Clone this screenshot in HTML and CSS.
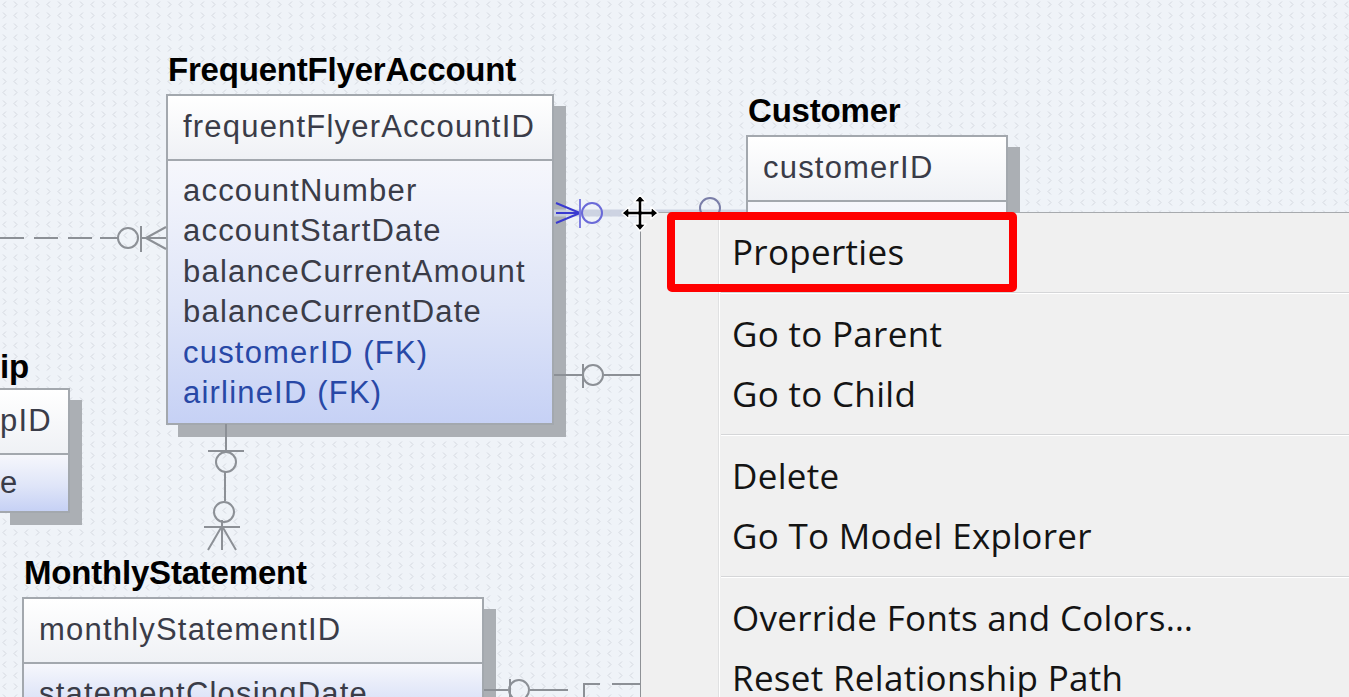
FILE: index.html
```html
<!DOCTYPE html>
<html lang="en">
<head>
<meta charset="utf-8">
<title>ER Diagram – Context Menu</title>
<link rel="stylesheet" href="styles.css">
</head>
<body>
<div class="canvas">

  <div class="entity ent-ffa">
    <div class="ent-title">FrequentFlyerAccount</div>
    <div class="ent-box">
      <div class="ent-pk"><div class="attr">frequentFlyerAccountID</div></div>
      <div class="ent-attrs">
        <div class="attr">accountNumber</div>
        <div class="attr">accountStartDate</div>
        <div class="attr">balanceCurrentAmount</div>
        <div class="attr">balanceCurrentDate</div>
        <div class="attr fk">customerID (FK)</div>
        <div class="attr fk">airlineID (FK)</div>
      </div>
    </div>
  </div>

  <div class="entity ent-customer">
    <div class="ent-title">Customer</div>
    <div class="ent-box">
      <div class="ent-pk"><div class="attr">customerID</div></div>
      <div class="ent-attrs ent-attrs-hidden"></div>
    </div>
  </div>

  <div class="entity ent-partial">
    <div class="ent-title">ip</div>
    <div class="ent-box">
      <div class="ent-pk"><div class="attr">pID</div></div>
      <div class="ent-attrs">
        <div class="attr">e</div>
      </div>
    </div>
  </div>

  <div class="entity ent-monthly">
    <div class="ent-title">MonthlyStatement</div>
    <div class="ent-box">
      <div class="ent-pk"><div class="attr">monthlyStatementID</div></div>
      <div class="ent-attrs">
        <div class="attr">statementClosingDate</div>
      </div>
    </div>
  </div>

  <svg class="edges" width="1349" height="697" viewBox="0 0 1349 697" aria-hidden="true">
    <g fill="none" stroke="#8c9096" stroke-width="2">
      <!-- left dashed relationship into FrequentFlyerAccount -->
      <path d="M0 238 H96" stroke-dasharray="24 10"/>
      <path d="M100 238 H118"/>
      <circle cx="128" cy="238" r="10"/>
      <path d="M141 226 V252"/>
      <path d="M141 238 H166 M146 238 L166 227 M146 238 L166 249"/>

      <!-- right relationship y=375 -->
      <path d="M554 375 H582 M604 375 H640"/>
      <path d="M583 364 V388"/>
      <circle cx="593" cy="375" r="10"/>

      <!-- vertical relationship down to MonthlyStatement -->
      <path d="M226 424 V451"/>
      <path d="M208 451 H244"/>
      <circle cx="226" cy="462" r="10"/>
      <path d="M225 472 V501"/>
      <circle cx="224" cy="512" r="10"/>
      <path d="M204 527 H240"/>
      <path d="M222 520 V550 M222 526 L208 550 M222 526 L236 550"/>

      <!-- bottom relationship -->
      <path d="M484 690 H508 M530 690 H568"/>
      <circle cx="519" cy="690" r="10"/>
      <path d="M510 679 V697"/>
      <path d="M584 697 V684 H600 M612 684 H640"/>
    </g>

    <!-- selected relationship (FFA to Customer) -->
    <path d="M554 213 H746" stroke="#c9cfdf" stroke-width="7" fill="none" opacity="0.9"/>
    <g fill="none" stroke="#3a3ad0" stroke-width="2">
      <path d="M556 203 L580 213 L556 223 M556 213 H580"/>
      <path d="M580 199 V228" stroke="#7c7ce0"/>
      <circle cx="592" cy="213" r="10" stroke="#6a6ad8"/>
    </g>
    <circle cx="710" cy="208" r="10" fill="none" stroke="#7a7ea8" stroke-width="2"/>
  </svg>

  <div class="menu">
    <div class="menu-gutter"></div>
    <ul class="menu-list">
      <li class="menu-item">Properties</li>
      <li class="menu-sep"></li>
      <li class="menu-item">Go to Parent</li>
      <li class="menu-item">Go to Child</li>
      <li class="menu-sep"></li>
      <li class="menu-item">Delete</li>
      <li class="menu-item">Go To Model Explorer</li>
      <li class="menu-sep"></li>
      <li class="menu-item">Override Fonts and Colors…</li>
      <li class="menu-item">Reset Relationship Path</li>
    </ul>
  </div>

  <div class="highlight-box"></div>

  <svg class="move-cursor" width="40" height="40" viewBox="0 0 40 40" aria-hidden="true">
    <path d="M20 2 L26 9 L22 9 L22 18 L31 18 L31 14 L38 20 L31 26 L31 22 L22 22 L22 31 L26 31 L20 38 L14 31 L18 31 L18 22 L9 22 L9 26 L2 20 L9 14 L9 18 L18 18 L18 9 L14 9 Z" fill="#000" stroke="#fff" stroke-width="1.5" stroke-linejoin="round"/>
  </svg>
</div>
</body>
</html>
```

FILE: styles.css
```css
html, body {
  margin: 0;
  padding: 0;
}

body {
  width: 1349px;
  height: 697px;
  overflow: hidden;
  background: #eef2f7;
}

.canvas {
  position: relative;
  width: 1349px;
  height: 697px;
  overflow: hidden;
  background-color: #eff3f8;
  background-image: url("data:image/svg+xml,%3Csvg xmlns='http://www.w3.org/2000/svg' width='22' height='22'%3E%3Cg fill='none' stroke='%23d3d7de' stroke-width='1'%3E%3Cpath d='M6 1.5 L3 4.5 L6 7.5'/%3E%3Cpath d='M14 1.5 L17 4.5 L14 7.5'/%3E%3Cpath d='M17 12.5 L14 15.5 L17 18.5'/%3E%3Cpath d='M3 12.5 L6 15.5 L3 18.5'/%3E%3C/g%3E%3C/svg%3E");
}

/* ---------- entities (diagram nodes) ---------- */
.entity {
  position: absolute;
  display: flex;
  flex-direction: column;
}

.ent-title {
  font-family: "Liberation Sans", Arial, sans-serif;
  font-weight: bold;
  font-size: 33px;
  letter-spacing: -0.2px;
  line-height: 36px;
  color: #000;
  padding-left: 2px;
  white-space: nowrap;
}

.ent-box {
  margin-top: 6px;
  border: 2px solid #a3a8ae;
  box-shadow: 12px 12px 0 #abafb4;
  display: flex;
  flex-direction: column;
}

.attr {
  font-family: "Liberation Sans", Arial, sans-serif;
  font-size: 31px;
  letter-spacing: 1.2px;
  line-height: 40.5px;
  height: 40.5px;
  color: #3a3c48;
  padding-left: 15px;
  white-space: nowrap;
}

.attr.fk {
  color: #2848a6;
}

.ent-pk {
  padding: 11px 0 11px;
  background: linear-gradient(#ffffff, #eff1f5);
  border-bottom: 2px solid #a3a8ae;
}

.ent-attrs {
  padding: 10px 0 9px;
  background: linear-gradient(#f6f7fc 0%, #dfe5f8 55%, #c6d1f5 100%);
}

.ent-attrs-hidden {
  height: 240px;
}

.ent-ffa {
  left: 166px;
  top: 52px;
  width: 388px;
}

.ent-customer {
  left: 746px;
  top: 93px;
  width: 262px;
}

.ent-monthly {
  left: 22px;
  top: 555px;
  width: 462px;
}

.ent-partial {
  left: -2px;
  top: 349px;
  width: 72px;
}

.ent-partial .ent-box {
  margin-top: 3px;
}

.ent-partial .ent-title {
  padding-left: 2px;
}

.ent-partial .attr {
  padding-left: 0;
}

.ent-partial .ent-attrs {
  padding-top: 8px;
  padding-bottom: 8px;
}

/* ---------- relationship lines ---------- */
.edges {
  position: absolute;
  left: 0;
  top: 0;
}

/* ---------- context menu ---------- */
.menu {
  position: absolute;
  left: 640px;
  top: 212px;
  width: 760px;
  height: 520px;
  background: #f0f0f0;
  border-left: 1px solid #8e9196;
  border-top: 1px solid #a7aaae;
  display: flex;
}

.menu-gutter {
  width: 77px;
  flex: none;
  border-right: 1px solid #e0e1e2;
  box-shadow: 1px 0 0 #ffffff;
}

.menu-list {
  list-style: none;
  margin: 0;
  padding: 9px 0 0 2px;
  flex: 1;
  display: flex;
  flex-direction: column;
}

.menu-item {
  font-family: "Open Sans", "Noto Sans", sans-serif;
  font-size: 35px;
  letter-spacing: 0.3px;
  line-height: 60.5px;
  height: 60.5px;
  color: #141414;
  padding-left: 11px;
  white-space: nowrap;
}

.menu-sep {
  height: 21px;
  display: flex;
  flex-direction: column;
  justify-content: center;
}

.menu-sep::before {
  content: "";
  display: block;
  height: 1px;
  background: #d5d6d8;
  border-bottom: 1px solid #ffffff;
}

/* ---------- red annotation ---------- */
.highlight-box {
  position: absolute;
  left: 667px;
  top: 212px;
  width: 334px;
  height: 64px;
  border: 8px solid #ff0000;
  border-radius: 5px;
}

.move-cursor {
  position: absolute;
  left: 620px;
  top: 193px;
}
```
